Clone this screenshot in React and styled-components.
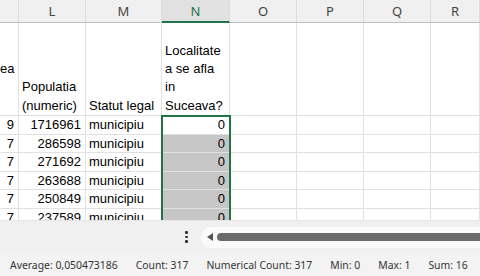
import React from 'react'
import styled, { createGlobalStyle } from 'styled-components'

const GlobalStyle = createGlobalStyle`
    html, body {
        margin: 0;
        padding: 0;
        background: #ffffff;
    }
`

const GREEN = '#217346'
const GRID = '#e1e1e1'

const Page = styled.div`
    width: 480px;
    height: 276px;
    display: flex;
    flex-direction: column;
    overflow: hidden;
`

const Sheet = styled.div`
    position: relative;
    height: 220px;
    overflow: hidden;
    display: grid;
    grid-template-columns: 19px 67px 76px 68px 67px 67px 67px 49px;
    grid-template-rows: 23px 93px repeat(6, 18.5px);
    background: #ffffff;
`

const ColHeader = styled.div`
    display: flex;
    align-items: center;
    justify-content: center;
    background: ${props => props.$active ? '#e1e1e1' : '#f0f0f0'};
    color: ${props => props.$active ? GREEN : '#444444'};
    font-family: "Noto Sans", sans-serif;
    font-size: 13px;
    border-right: 1px solid #dcdcdc;
    border-bottom: ${props => props.$active ? `2px solid ${GREEN}` : '1px solid #bfbfbf'};
    box-sizing: border-box;
`

const Cell = styled.div`
    box-sizing: border-box;
    border-right: 1px solid ${GRID};
    border-bottom: 1px solid ${GRID};
    background: ${props => props.$shade ? '#c6c6c6' : '#ffffff'};
    font-family: "Liberation Sans", Arial, sans-serif;
    font-size: 13px;
    color: #000000;
    line-height: 18px;
    white-space: nowrap;
    overflow: hidden;
    text-align: ${props => props.$align || 'left'};
    padding: ${props => props.$align === 'right' ? '0 4px 0 0' : '0 0 0 3px'};
`

const TitleCell = styled(Cell)`
    display: flex;
    flex-direction: column;
    justify-content: flex-end;
    line-height: 18.3px;
    white-space: normal;
    padding-left: ${props => props.$clipped ? '0' : '3px'};
`

const Selection = styled.div`
    position: absolute;
    left: 161px;
    top: 115px;
    width: 70px;
    height: 120px;
    box-sizing: border-box;
    border: 2px solid ${GREEN};
    pointer-events: none;
`

const ScrollArea = styled.div`
    height: 33px;
    background: #f0f0f0;
    border-top: 1px solid #e4e4e4;
    box-sizing: border-box;
    display: flex;
    align-items: center;
    padding-left: 185px;
    gap: 13px;
`

const Dots = styled.div`
    display: flex;
    flex-direction: column;
    gap: 2px;
    width: 3px;
`

const Dot = styled.span`
    width: 3px;
    height: 2.5px;
    background: #333333;
    border-radius: 1px;
`

const Track = styled.div`
    flex: 1;
    height: 21px;
    background: #fafafa;
    border-radius: 10px 0 0 10px;
    display: flex;
    align-items: center;
    padding-left: 6px;
    gap: 4px;
`

const Arrow = styled.div`
    width: 0;
    height: 0;
    border-top: 4.5px solid transparent;
    border-bottom: 4.5px solid transparent;
    border-right: 6px solid #555555;
`

const Thumb = styled.div`
    flex: 1;
    height: 8.5px;
    background: #6b6b6b;
    border-radius: 4px 0 0 4px;
`

const StatusBar = styled.div`
    height: 23px;
    background: #f3f3f3;
    display: flex;
    align-items: center;
    padding-left: 10px;
    gap: 18px;
    font-family: "Noto Sans", sans-serif;
    font-size: 10.4px;
    color: #333333;
    white-space: nowrap;
`

const columns = ['', 'L', 'M', 'N', 'O', 'P', 'Q', 'R']

const rows = [
    ['9', '1716961', 'municipiu', '0'],
    ['7', '286598', 'municipiu', '0'],
    ['7', '271692', 'municipiu', '0'],
    ['7', '263688', 'municipiu', '0'],
    ['7', '250849', 'municipiu', '0'],
    ['7', '237589', 'municipiu', '0'],
]

const stats = [
    'Average: 0,050473186',
    'Count: 317',
    'Numerical Count: 317',
    'Min: 0',
    'Max: 1',
    'Sum: 16',
]

const TitleLines = ({ lines, ...props }) => (
    <TitleCell {...props}>
        {lines.map((line, i) => <div key={i}>{line || '\u00a0'}</div>)}
    </TitleCell>
)

export default function App() {
    return (
        <Page>
            <GlobalStyle />
            <Sheet>
                {columns.map((c, i) =>
                    <ColHeader key={i} $active={c === 'N'}>{c}</ColHeader>
                )}

                <TitleLines lines={['ea', '', '']} $clipped />
                <TitleLines lines={['Populatia', '(numeric)']} />
                <TitleLines lines={['Statut legal']} />
                <TitleLines lines={['Localitate', 'a se afla', 'in', 'Suceava?']} />
                <Cell />
                <Cell />
                <Cell />
                <Cell />

                {rows.map((r, i) =>
                    <React.Fragment key={i}>
                        <Cell $align="right">{r[0]}</Cell>
                        <Cell $align="right">{r[1]}</Cell>
                        <Cell>{r[2]}</Cell>
                        <Cell $align="right" $shade={i > 0}>{r[3]}</Cell>
                        <Cell />
                        <Cell />
                        <Cell />
                        <Cell />
                    </React.Fragment>
                )}

                <Selection />
            </Sheet>

            <ScrollArea>
                <Dots>
                    <Dot />
                    <Dot />
                    <Dot />
                </Dots>
                <Track>
                    <Arrow />
                    <Thumb />
                </Track>
            </ScrollArea>

            <StatusBar>
                {stats.map((s, i) => <span key={i}>{s}</span>)}
            </StatusBar>
        </Page>
    )
}
